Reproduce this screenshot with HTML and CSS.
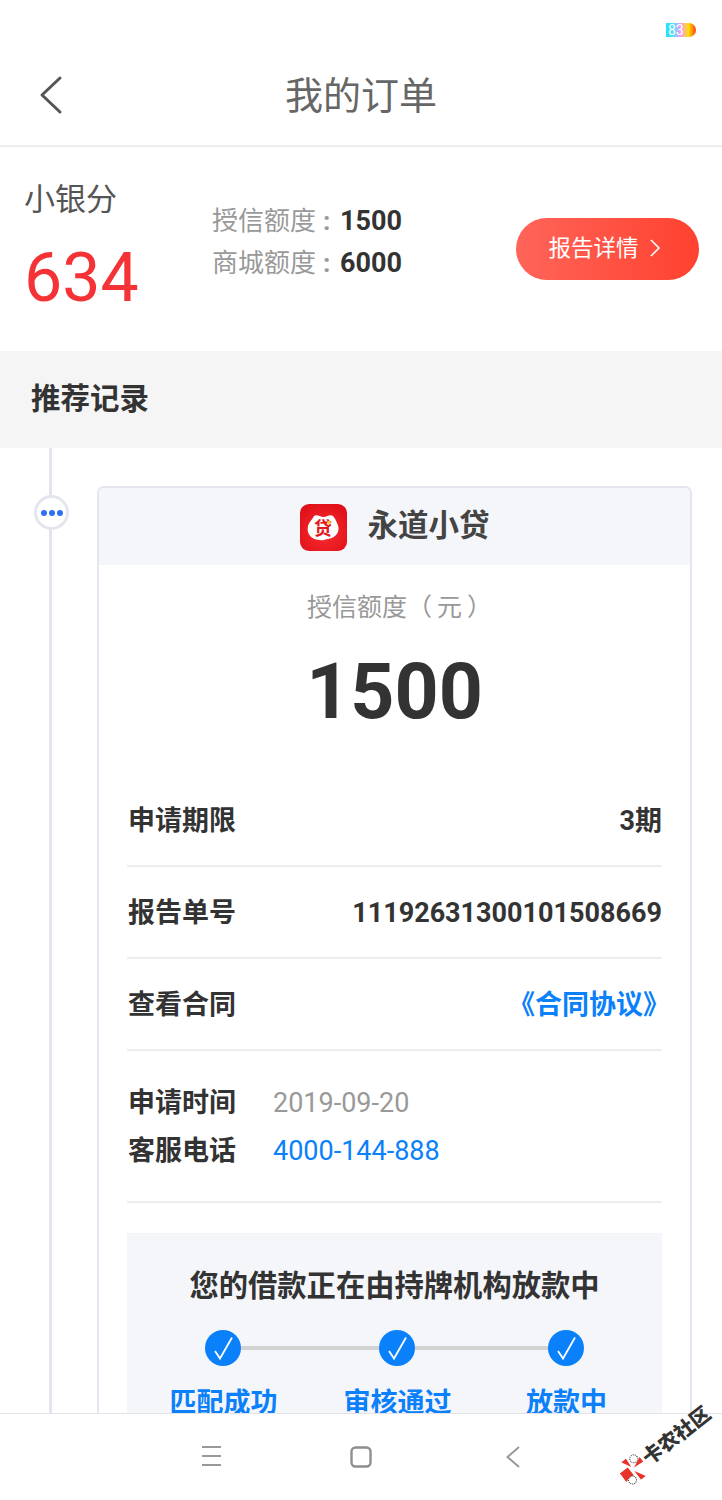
FILE: index.html
```html
<!DOCTYPE html>
<html lang="zh">
<head>
<meta charset="utf-8">
<title>我的订单</title>
<link rel="stylesheet" href="styles.css">
</head>
<body>
<div class="page">
  <div class="status"><span class="battery">83</span></div>
  <header class="header">
    <svg class="back" width="24" height="40" viewBox="0 0 24 40"><path d="M21 3 L3 20 L21 37" fill="none" stroke="#555" stroke-width="3" stroke-linecap="round" stroke-linejoin="round"/></svg>
    <h1 class="title">我的订单</h1>
  </header>
  <section class="summary">
    <div class="score">
      <div class="score-label">小银分</div>
      <div class="score-value">634</div>
    </div>
    <div class="limits">
      <div class="limit"><span class="limit-name">授信额度<span class="colon">:</span></span><b class="limit-value">1500</b></div>
      <div class="limit"><span class="limit-name">商城额度<span class="colon">:</span></span><b class="limit-value">6000</b></div>
    </div>
    <div class="report-btn">报告详情
      <svg width="12" height="20" viewBox="0 0 12 20"><path d="M2 2 L10 10 L2 18" fill="none" stroke="#fff" stroke-width="1.6"/></svg>
    </div>
  </section>
  <div class="section-title">推荐记录</div>
  <main class="timeline">
    <div class="rail"><div class="dot"><i></i><i></i><i></i></div></div>
    <article class="card">
      <div class="card-head">
        <svg class="app-icon" width="47" height="47" viewBox="0 0 47 47">
          <defs><radialGradient id="appred" cx="50%" cy="60%" r="65%"><stop offset="0" stop-color="#fb2c2e"/><stop offset="1" stop-color="#e0101a"/></radialGradient></defs>
          <rect width="47" height="47" rx="9" fill="url(#appred)"/>
          <path d="M14 12 C17 10 20 13 23.5 13 C27 13 30 10 33 12 C35 14 36 17 37 19 C41 26 37 34 28 35 C25 35.5 23 37 20 36 C12 36 6 30 8 22 C9 18 12 16 14 12 Z" fill="#fff"/>
          <text class="app-glyph" x="23" y="31">贷</text>
          <circle cx="29" cy="18.5" r="1.8" fill="#f7c92c"/>
        </svg>
        <span class="app-name">永道小贷</span>
      </div>
      <div class="amount-label">授信额度（<span class="paren">元</span>）</div>
      <div class="amount">1500</div>
      <div class="card-body">
        <div class="row"><span>申请期限</span><span>3期</span></div>
        <div class="row"><span>报告单号</span><span>1119263130010150866<!-- -->9</span></div>
        <div class="row"><span>查看合同</span><span class="link">《合同协议》</span></div>
        <div class="contact">
          <div class="contact-row"><b>申请时间</b><span class="muted">2019-09-20</span></div>
          <div class="contact-row"><b>客服电话</b><span class="phone">4000-144-888</span></div>
        </div>
        <div class="panel">
          <div class="panel-title">您的借款正在由持牌机构放款中</div>
          <div class="steps">
            <div class="step step-a">
              <svg class="check" width="36" height="36" viewBox="0 0 36 36"><circle cx="18" cy="18" r="18" fill="#0a80fb"/><path d="M10 21 L15 28.5 L27 7.5" fill="none" stroke="#fff" stroke-width="1.8"/></svg>
              <span>匹配成功</span>
            </div>
            <div class="step step-b">
              <svg class="check" width="36" height="36" viewBox="0 0 36 36"><circle cx="18" cy="18" r="18" fill="#0a80fb"/><path d="M10 21 L15 28.5 L27 7.5" fill="none" stroke="#fff" stroke-width="1.8"/></svg>
              <span>审核通过</span>
            </div>
            <div class="step step-c">
              <svg class="check" width="36" height="36" viewBox="0 0 36 36"><circle cx="18" cy="18" r="18" fill="#0a80fb"/><path d="M10 21 L15 28.5 L27 7.5" fill="none" stroke="#fff" stroke-width="1.8"/></svg>
              <span>放款中</span>
            </div>
          </div>
        </div>
      </div>
    </article>
  </main>
  <nav class="navbar">
    <svg width="22" height="22" viewBox="0 0 22 22"><path d="M1 2 H20 M1 11 H20 M1 20 H20" stroke="#999" stroke-width="2"/></svg>
    <svg width="22" height="22" viewBox="0 0 22 22"><rect x="1.5" y="1.5" width="19" height="19" rx="4" fill="none" stroke="#8f8f8f" stroke-width="2.4"/></svg>
    <svg width="14" height="22" viewBox="0 0 14 22"><path d="M13 1 L1.5 11 L13 21" fill="none" stroke="#999" stroke-width="2"/></svg>
  </nav>
  <div class="watermark">
    <svg width="26" height="26" viewBox="0 0 26 26"><rect x="0" y="8" width="10" height="10" fill="#e8332a"/><path d="M8 0 L14 0 L13 10 Z M26 7 L26 13 L15 12 Z M19 26 L13 26 L13 15 Z M0 19 L0 13 L10 14 Z" fill="#e8332a"/><circle cx="20" cy="5" r="4" fill="#fff" stroke="#333" stroke-dasharray="1 1"/><circle cx="6" cy="21" r="4" fill="#fff" stroke="#333" stroke-dasharray="1 1"/></svg>
    <span>卡农社区</span>
  </div>
</div>
</body>
</html>
```
FILE: styles.css
```css
* { box-sizing: border-box; }
html, body { margin: 0; padding: 0; background: #fff; }
body { font-family: Roboto, "Noto Sans CJK SC", sans-serif; }
.page { position: relative; width: 722px; height: 1500px; overflow: hidden; display: flex; flex-direction: column; background: #fff; }

.status { height: 60px; flex: none; display: flex; justify-content: flex-end; align-items: flex-start; padding: 23px 26px 0 0; }
.battery { width: 30px; height: 14px; font-size: 14px; line-height: 14px; color: #fff; padding-left: 2px; border-radius: 0 7px 7px 0; background: linear-gradient(90deg, #19e6f5 0%, #5fdcfb 25%, #f39bfb 50%, #ffe000 75%, #ff3d10 100%); }

.header { height: 87px; flex: none; position: relative; display: flex; align-items: center; justify-content: center; border-bottom: 2px solid #eeeeee; padding-bottom: 14px; }
.back { position: absolute; left: 39px; top: 15px; }
.title { margin: 0; font-size: 38px; line-height: 50px; font-weight: 400; color: #666; }

.summary { height: 204px; flex: none; display: flex; align-items: center; padding: 0 23px 0 24px; }
.score { width: 188px; margin-top: -2px; }
.score-label { font-size: 31px; line-height: 44px; color: #555; }
.score-value { font-size: 68px; line-height: 80px; color: #f53337; margin-top: 16px; }
.limits { flex: 1; margin-top: -14px; }
.limit { height: 42px; display: flex; align-items: center; line-height: 40px; }
.limit-name { font-size: 26px; color: #999; width: 128px; flex: none; white-space: nowrap; }
.colon { margin-left: 7px; font-weight: 700; }
.limit-value { font-size: 27px; color: #333; font-weight: 700; }
.report-btn { width: 183px; height: 62px; border-radius: 31px; display: flex; align-items: center; justify-content: center; gap: 10px; padding: 0 6px 3px 0; color: #fff; font-size: 22.5px; line-height: 40px; background: linear-gradient(90deg, #ff6559, #ff412f); }

.section-title { height: 97px; flex: none; background: #f5f5f5; padding-left: 31px; font-size: 29.5px; line-height: 96px; font-weight: 700; color: #333; }

.timeline { flex: 1; min-height: 0; display: flex; overflow: hidden; padding-right: 30px; }
.rail { width: 97px; flex: none; position: relative; padding: 47px 0 0 34px; }
.rail::before { content: ""; position: absolute; left: 49px; top: 0; bottom: 0; width: 3px; background: #e2e5ee; }
.dot { position: relative; width: 35px; height: 35px; border-radius: 50%; border: 3px solid #e3e6ee; background: #fff; display: flex; align-items: center; justify-content: center; gap: 2px; }
.dot i { width: 6px; height: 6px; border-radius: 50%; background: #2f6ff0; }

.card { flex: 1; margin-top: 38px; height: 1000px; border: 2px solid #e3e6ee; border-bottom: 0; border-radius: 7px 7px 0 0; }
.card-head { height: 77px; background: #f5f6fa; border-radius: 5px 5px 0 0; display: flex; align-items: center; justify-content: center; gap: 21px; }
.app-icon { display: block; margin-top: 1px; }
.app-glyph { font-size: 18px; font-weight: 700; fill: #e3181f; text-anchor: middle; }
.app-name { font-size: 30.5px; font-weight: 700; color: #444; line-height: 40px; margin-bottom: 2px; }

.amount-label { margin-top: 25px; padding-left: 10px; font-size: 25px; line-height: 36px; color: #999; text-align: center; }
.paren { margin: 0 5px; }
.amount { margin-top: 21px; font-size: 77px; line-height: 90px; font-weight: 700; color: #333; text-align: center; }

.card-body { padding: 38px 28px 0; }
.row { height: 92px; border-bottom: 2px solid #eeeeee; display: flex; align-items: center; justify-content: space-between; font-size: 27px; line-height: 40px; font-weight: 700; color: #333; padding: 2px 0 0 1px; }
.row .link { color: #0a80fb; margin-right: -8px; }
.contact { padding: 28px 0 26px 1px; border-bottom: 2px solid #eeeeee; }
.contact-row { height: 48px; display: flex; align-items: center; font-size: 27px; line-height: 40px; color: #333; }
.contact-row b { width: 145px; flex: none; font-weight: 700; }
.muted { color: #999; }
.phone { color: #0a80fb; }

.panel { margin-top: 30px; background: #f5f6fa; padding: 33px 0 0; height: 300px; }
.panel-title { font-size: 29.3px; line-height: 40px; font-weight: 700; color: #333; text-align: center; }
.steps { position: relative; margin-top: 24px; display: flex; padding-left: 43px; }
.steps::before { content: ""; position: absolute; left: 95px; width: 343px; top: 16px; height: 4px; background: #d2d4d4; }
.step { position: relative; display: flex; flex-direction: column; align-items: center; font-size: 27px; line-height: 40px; font-weight: 700; color: #0a80fb; }
.check { margin-left: -2px; }
.step span { margin-top: 17px; white-space: nowrap; }
.step-a, .step-b { width: 107px; }
.step-b { margin-left: 67px; }
.step-c { width: 81px; margin-left: 75px; }

.navbar { height: 87px; flex: none; position: relative; background: #fff; border-top: 1px solid #e4e4e8; display: flex; align-items: flex-start; gap: 127px; padding: 31px 0 0 201px; }
.navbar svg + svg { margin-top: 1px; }
.navbar svg + svg + svg { margin-left: 7px; }

.watermark { position: absolute; left: 611px; top: 1428px; width: 112px; height: 30px; display: flex; align-items: center; gap: 2px; transform: rotate(-38deg); font-size: 20px; font-weight: 900; color: #333; white-space: nowrap; line-height: 30px; }
```
